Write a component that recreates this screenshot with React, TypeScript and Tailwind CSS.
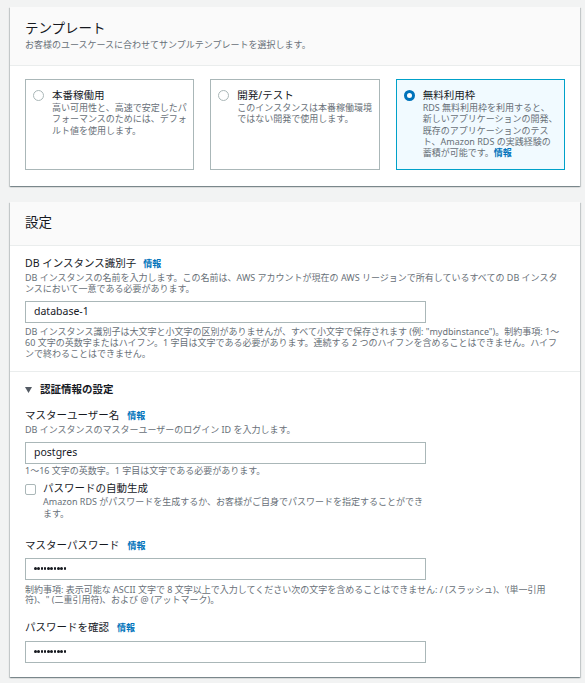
import React from "react";

const tiles = [
  {
    title: "本番稼働用",
    lines: ["高い可用性と、高速で安定したパ", "フォーマンスのためには、デフォ", "ルト値を使用します。"],
    selected: false,
  },
  {
    title: "開発/テスト",
    lines: ["このインスタンスは本番稼働環境", "ではない開発で使用します。"],
    selected: false,
  },
  {
    title: "無料利用枠",
    lines: ["RDS 無料利用枠を利用すると、", "新しいアプリケーションの開発、", "既存のアプリケーションのテス", "ト、Amazon RDS の実践経験の"],
    last: "蓄積が可能です。",
    selected: true,
  },
];

function Info({ className = "" }: { className?: string }) {
  return <span className={`text-[9px] font-bold text-[#0073bb] ${className}`}>情報</span>;
}

function Lines({ lines }: { lines: string[] }) {
  return (
    <div className="text-[9px] leading-[11.25px] text-[#687078]">
      {lines.map((l) => (
        <div key={l} className="whitespace-nowrap">
          {l}
        </div>
      ))}
    </div>
  );
}

function TextInput({ value, password = false, className = "" }: { value: string; password?: boolean; className?: string }) {
  return (
    <div className={`flex h-[22px] w-[401px] items-center border border-[#aab7b8] bg-white pl-[8px] ${className}`}>
      {password ? (
        <div className="flex gap-[0.7px]">
          {Array.from({ length: 10 }).map((_, i) => (
            <span key={i} className="h-[2.6px] w-[2.6px] rounded-full bg-[#16191f]" />
          ))}
        </div>
      ) : (
        <span className="text-[10.5px] text-[#16191f]">{value}</span>
      )}
    </div>
  );
}

export default function App() {
  return (
    <div className="min-h-[683px] bg-[#f2f3f3] pt-[7px] pl-[10px] pr-[5px] font-[family-name:'Noto_Sans','Noto_Sans_CJK_JP',sans-serif] text-[#16191f]">
      {/* テンプレート */}
      <section className="bg-white shadow-[0_1px_1px_0_rgba(0,28,36,0.3),1px_1px_1px_0_rgba(0,28,36,0.15),-1px_1px_1px_0_rgba(0,28,36,0.15)]">
        <div className="h-[59px] border-b border-[#eaeded] bg-[#fafafa] px-[15px] pt-[13px]">
          <h2 className="text-[13.5px] leading-[17px]">テンプレート</h2>
          <p className="mt-[2px] text-[9px] leading-[11.25px] text-[#687078]">お客様のユースケースに合わせてサンプルテンプレートを選択します。</p>
        </div>
        <div className="grid grid-cols-3 gap-[16px] px-[15px] pt-[13px] pb-[16px]">
          {tiles.map((t) => (
            <div
              key={t.title}
              className={`flex h-[91px] gap-[8px] border pl-[7px] pt-[8px] ${
                t.selected ? "border-[#00a1c9] bg-[#f1faff]" : "border-[#aab7b8] bg-white"
              }`}
            >
              <div className="pt-[2px]">
                {t.selected ? (
                  <div className="h-[11px] w-[11px] rounded-full border-[3.5px] border-[#0073bb] bg-white" />
                ) : (
                  <div className="h-[11px] w-[11px] rounded-full border border-[#aab7b8] bg-white" />
                )}
              </div>
              <div>
                <div className="text-[10.5px] leading-[14px]">{t.title}</div>
                <Lines lines={t.lines} />
                {t.last && (
                  <div className="text-[9px] leading-[11.25px] text-[#687078]">
                    {t.last}
                    <Info />
                  </div>
                )}
              </div>
            </div>
          ))}
        </div>
      </section>

      {/* 設定 */}
      <section className="mt-[16px] bg-white shadow-[0_1px_1px_0_rgba(0,28,36,0.3),1px_1px_1px_0_rgba(0,28,36,0.15),-1px_1px_1px_0_rgba(0,28,36,0.15)]">
        <div className="h-[44px] border-b border-[#eaeded] bg-[#fafafa] px-[15px] pt-[12px]">
          <h2 className="text-[13.5px] leading-[17px]">設定</h2>
        </div>

        <div className="px-[15px] pt-[9px] pb-[12px]">
          <div className="flex items-baseline text-[10.5px] leading-[16px]">
            DB インスタンス識別子
            <Info className="ml-[7px]" />
          </div>
          <Lines
            lines={[
              "DB インスタンスの名前を入力します。この名前は、AWS アカウントが現在の AWS リージョンで所有しているすべての DB インスタ",
              "ンスにおいて一意である必要があります。",
            ]}
          />
          <TextInput value="database-1" className="mt-[6px]" />
          <div className="mt-[3px]">
            <Lines
              lines={[
                'DB インスタンス識別子は大文字と小文字の区別がありませんが、すべて小文字で保存されます (例: "mydbinstance")。制約事項: 1～',
                "60 文字の英数字またはハイフン。1 字目は文字である必要があります。連続する 2 つのハイフンを含めることはできません。ハイフ",
                "ンで終わることはできません。",
              ]}
            />
          </div>
        </div>

        <div className="border-t border-[#eaeded] px-[15px] pt-[10px] pb-[14px]">
          <div className="flex items-center gap-[8px] text-[10.5px] font-semibold leading-[15px] text-[#16191f]">
            <svg width="7" height="6" viewBox="0 0 7 6">
              <polygon points="0,0 7,0 3.5,6" fill="#545b64" />
            </svg>
            認証情報の設定
          </div>

          <div className="mt-[10px] flex items-baseline text-[10.5px] leading-[16px]">
            マスターユーザー名
            <Info className="ml-[8px]" />
          </div>
          <Lines lines={["DB インスタンスのマスターユーザーのログイン ID を入力します。"]} />
          <TextInput value="postgres" className="mt-[6px]" />
          <div className="mt-[1px]">
            <Lines lines={["1～16 文字の英数字。1 字目は文字である必要があります。"]} />
          </div>

          <div className="mt-[4px] flex gap-[7px]">
            <div className="mt-[4px] h-[11px] w-[11px] rounded-[2px] border border-[#aab7b8] bg-white" />
            <div>
              <div className="text-[10.5px] leading-[16px]">パスワードの自動生成</div>
              <div className="text-[9px] leading-[12px] text-[#687078]">
                <div>Amazon RDS がパスワードを生成するか、お客様がご自身でパスワードを指定することができ</div>
                <div>ます。</div>
              </div>
            </div>
          </div>

          <div className="mt-[17px] flex items-baseline text-[10.5px] leading-[16px]">
            マスターパスワード
            <Info className="ml-[8px]" />
          </div>
          <TextInput value="" password className="mt-[4px]" />
          <div className="mt-[5px] text-[9px] leading-[10.5px] text-[#687078]">
            <div className="whitespace-nowrap">
              制約事項: 表示可能な ASCII 文字で 8 文字以上で入力してください次の文字を含めることはできません: / (スラッシュ)、'(単一引用
            </div>
            <div>符)、" (二重引用符)、および @ (アットマーク)。</div>
          </div>

          <div className="mt-[13px] flex items-baseline text-[10.5px] leading-[16px]">
            パスワードを確認
            <Info className="ml-[8px]" />
          </div>
          <TextInput value="" password className="mt-[5px]" />
        </div>
      </section>
    </div>
  );
}
